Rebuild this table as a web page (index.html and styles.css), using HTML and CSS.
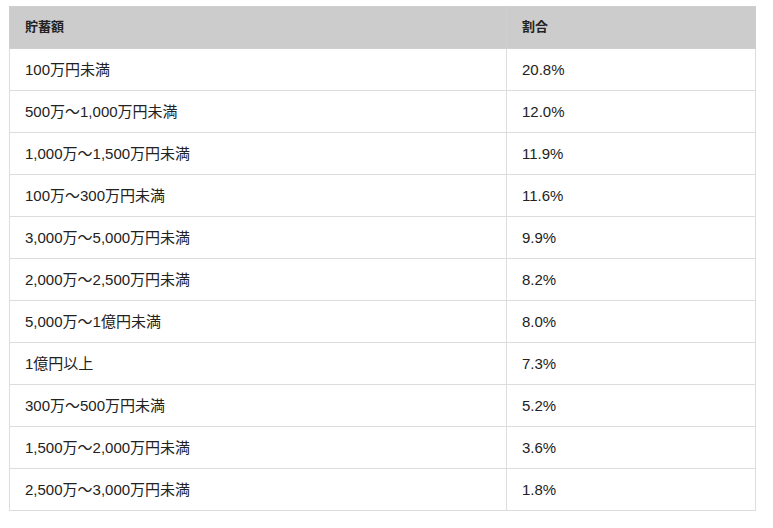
FILE: index.html
```html
<!DOCTYPE html>
<html lang="ja">
<head>
<meta charset="utf-8">
<title>貯蓄額の割合</title>
<link rel="stylesheet" href="styles.css">
</head>
<body>
<table class="savings">
  <colgroup><col class="col-amount"><col class="col-rate"></colgroup>
  <thead>
    <tr><th>貯蓄額</th><th>割合</th></tr>
  </thead>
  <tbody>
    <tr><td>100万円未満</td><td>20.8%</td></tr>
    <tr><td>500万〜1,000万円未満</td><td>12.0%</td></tr>
    <tr><td>1,000万〜1,500万円未満</td><td>11.9%</td></tr>
    <tr><td>100万〜300万円未満</td><td>11.6%</td></tr>
    <tr><td>3,000万〜5,000万円未満</td><td>9.9%</td></tr>
    <tr><td>2,000万〜2,500万円未満</td><td>8.2%</td></tr>
    <tr><td>5,000万〜1億円未満</td><td>8.0%</td></tr>
    <tr><td>1億円以上</td><td>7.3%</td></tr>
    <tr><td>300万〜500万円未満</td><td>5.2%</td></tr>
    <tr><td>1,500万〜2,000万円未満</td><td>3.6%</td></tr>
    <tr><td>2,500万〜3,000万円未満</td><td>1.8%</td></tr>
  </tbody>
</table>
</body>
</html>
```
FILE: styles.css
```css
html, body {
  margin: 0;
  padding: 0;
  background: #fff;
}
body {
  padding: 6px 0 0 9px;
  font-family: "Liberation Sans", "Noto Sans CJK JP", sans-serif;
  font-size: 15px;
  color: #222;
}
.savings {
  width: 746px;
  border-collapse: collapse;
  table-layout: fixed;
  border: 1px solid #ddd;
}
.col-amount { width: 497px; }
.col-rate { width: 249px; }
.savings th,
.savings td {
  height: 42px;
  padding: 0 15px;
  border: 1px solid #ddd;
  text-align: left;
  vertical-align: middle;
  box-sizing: border-box;
  line-height: 20px;
}
.savings th {
  background: #cccccc;
  font-size: 13px;
  font-weight: bold;
  color: #222;
  border-color: #cfcfcf;
  padding-bottom: 2px;
}
.savings td {
  font-weight: normal;
  color: #222;
}
```
